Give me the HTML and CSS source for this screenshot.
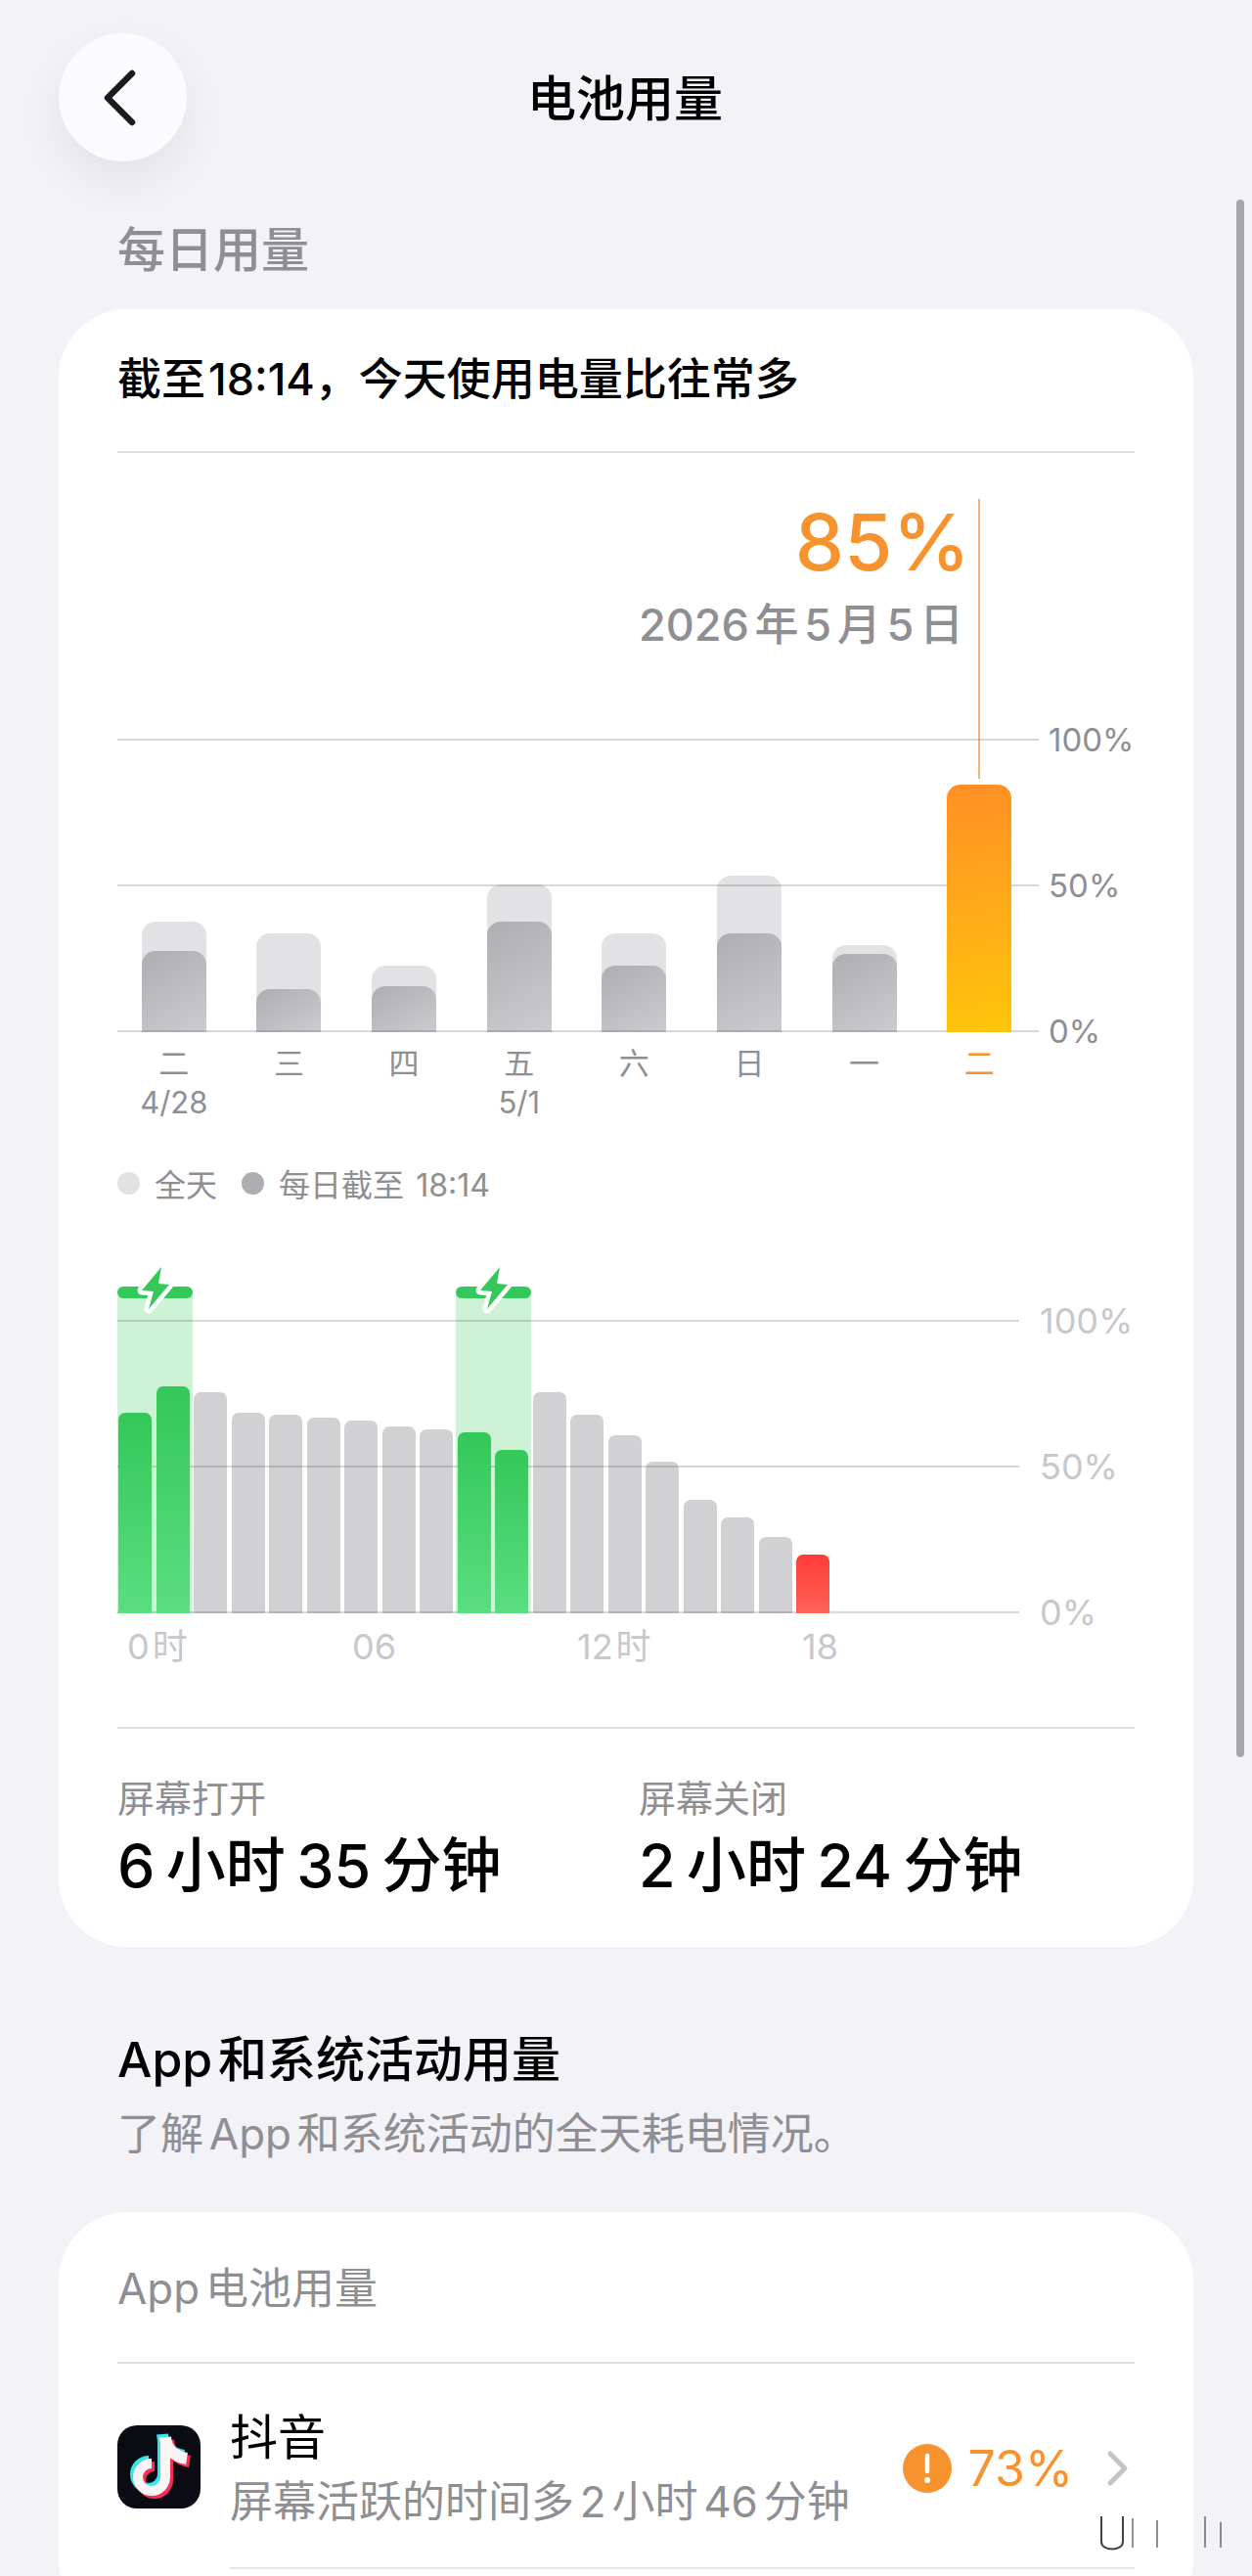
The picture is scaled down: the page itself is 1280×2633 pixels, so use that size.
FILE: index.html
```html
<!DOCTYPE html>
<html lang="zh">
<head>
    <meta charset="utf-8">
    <title>电池用量</title>
    <link rel="stylesheet" href="styles.css">
</head>
<body>
    <div class="page">
        <div class="top-bar">
            <div class="back-btn">
                <svg width="36" height="60" viewBox="0 0 36 60"><path d="M31 5 L6 30 L31 55" fill="none" stroke="#1c1c1e" stroke-width="6.5" stroke-linecap="round" stroke-linejoin="round"/></svg>
            </div>
            <h1 class="title">电池用量</h1>
        </div>

        <h2 class="section-label">每日用量</h2>

        <div class="card usage-card">
            <p class="card-heading">截至 18:14，今天使用电量比往常多</p>
            <div class="divider"></div>

            <div class="callout">
                <div class="callout-value">85%</div>
                <div class="callout-date">2026 年 5 月 5 日</div>
                <div class="callout-line"></div>
            </div>

            <div class="plot">
                <div class="days">
                    <div class="day"><div class="bar-all" style="height:113px"></div><div class="bar-now" style="height:83px"></div></div>
                    <div class="day"><div class="bar-all" style="height:101px"></div><div class="bar-now" style="height:44px"></div></div>
                    <div class="day"><div class="bar-all" style="height:68px"></div><div class="bar-now" style="height:47px"></div></div>
                    <div class="day"><div class="bar-all" style="height:151px"></div><div class="bar-now" style="height:113px"></div></div>
                    <div class="day"><div class="bar-all" style="height:101px"></div><div class="bar-now" style="height:68px"></div></div>
                    <div class="day"><div class="bar-all" style="height:160px"></div><div class="bar-now" style="height:101px"></div></div>
                    <div class="day"><div class="bar-all" style="height:89px"></div><div class="bar-now" style="height:80px"></div></div>
                    <div class="day"><div class="bar-today" style="height:253px"></div></div>
                </div>
                <div class="axis">
                    <div class="axis-row"><span class="axis-line"></span><span class="axis-label">100%</span></div>
                    <div class="axis-row"><span class="axis-line"></span><span class="axis-label">50%</span></div>
                    <div class="axis-row"><span class="axis-line"></span><span class="axis-label">0%</span></div>
                </div>
            </div>

            <div class="day-labels">
                <div class="day-label">二<br>4/28</div>
                <div class="day-label">三</div>
                <div class="day-label">四</div>
                <div class="day-label">五<br>5/1</div>
                <div class="day-label">六</div>
                <div class="day-label">日</div>
                <div class="day-label">一</div>
                <div class="day-label today">二</div>
            </div>

            <div class="legend">
                <span class="dot dot-all"></span><span class="legend-text">全天</span>
                <span class="dot dot-now"></span><span class="legend-text">每日截至 18:14</span>
            </div>

            <div class="plot hourly">
                <div class="charge charge-a">
                    <div class="charge-cap"></div>
                    <svg class="bolt" width="44" height="56" viewBox="0 0 44 56"><path d="M27 6 L7 30 L19 31 L14 49 L35 24 L24 23 Z" fill="#34c759" stroke="#fff" stroke-width="9" stroke-linejoin="round" paint-order="stroke"/></svg>
                </div>
                <div class="charge charge-b">
                    <div class="charge-cap"></div>
                    <svg class="bolt" width="44" height="56" viewBox="0 0 44 56"><path d="M27 6 L7 30 L19 31 L14 49 L35 24 L24 23 Z" fill="#34c759" stroke="#fff" stroke-width="9" stroke-linejoin="round" paint-order="stroke"/></svg>
                </div>
                <div class="hours">
                    <div class="hour green" style="height:205px"></div>
                    <div class="hour green" style="height:232px"></div>
                    <div class="hour" style="height:226px"></div>
                    <div class="hour" style="height:205px"></div>
                    <div class="hour" style="height:203px"></div>
                    <div class="hour" style="height:200px"></div>
                    <div class="hour" style="height:197px"></div>
                    <div class="hour" style="height:191px"></div>
                    <div class="hour" style="height:188px"></div>
                    <div class="hour green" style="height:185px"></div>
                    <div class="hour green" style="height:167px"></div>
                    <div class="hour" style="height:226px"></div>
                    <div class="hour" style="height:203px"></div>
                    <div class="hour" style="height:182px"></div>
                    <div class="hour" style="height:155px"></div>
                    <div class="hour" style="height:116px"></div>
                    <div class="hour" style="height:98px"></div>
                    <div class="hour" style="height:78px"></div>
                    <div class="hour red" style="height:60px"></div>
                </div>
                <div class="axis">
                    <div class="axis-row"><span class="axis-line"></span><span class="axis-label">100%</span></div>
                    <div class="axis-row"><span class="axis-line"></span><span class="axis-label">50%</span></div>
                    <div class="axis-row"><span class="axis-line"></span><span class="axis-label">0%</span></div>
                </div>
            </div>

            <div class="hour-labels">
                <span>0 时</span>
                <span>06</span>
                <span>12 时</span>
                <span>18</span>
            </div>

            <div class="divider stats-divider"></div>

            <div class="stats">
                <div class="stat">
                    <div class="stat-label">屏幕打开</div>
                    <div class="stat-value">6 小时 35 分钟</div>
                </div>
                <div class="stat">
                    <div class="stat-label">屏幕关闭</div>
                    <div class="stat-value">2 小时 24 分钟</div>
                </div>
            </div>
        </div>

        <h2 class="activity-title">App 和系统活动用量</h2>
        <p class="activity-desc">了解 App 和系统活动的全天耗电情况。</p>

        <div class="card apps-card">
            <p class="apps-label">App 电池用量</p>
            <div class="divider"></div>
            <div class="app-row">
                <svg class="app-icon" width="85" height="85" viewBox="0 0 85 85">
                    <rect width="85" height="85" rx="20" fill="#0b0b14"/>
                    <g transform="translate(-3 -3)" fill="none" stroke="#35e6e8" stroke-width="10">
                        <path d="M49 17 V53 A14 14 0 1 1 35 39"/>
                        <path d="M49 12 C50 24 58 32 71 34" stroke-width="12"/>
                    </g>
                    <g transform="translate(3 3)" fill="none" stroke="#f0305a" stroke-width="10">
                        <path d="M49 17 V53 A14 14 0 1 1 35 39"/>
                        <path d="M49 12 C50 24 58 32 71 34" stroke-width="12"/>
                    </g>
                    <g fill="none" stroke="#fbf4f5" stroke-width="10">
                        <path d="M49 17 V53 A14 14 0 1 1 35 39"/>
                        <path d="M49 12 C50 24 58 32 71 34" stroke-width="12"/>
                    </g>
                </svg>
                <div class="app-main">
                    <div class="app-text">
                        <div class="app-name">抖音</div>
                        <div class="app-note">屏幕活跃的时间多 2 小时 46 分钟</div>
                    </div>
                    <div class="app-side">
                        <svg width="50" height="50" viewBox="0 0 50 50"><circle cx="25" cy="25" r="25" fill="#f7932e"/><path d="M25 12 V28" stroke="#fff" stroke-width="4.5" stroke-linecap="round"/><circle cx="25" cy="37" r="3" fill="#fff"/></svg>
                        <span class="app-percent">73%</span>
                        <svg width="24" height="38" viewBox="0 0 24 38"><path d="M4 4 L19 19 L4 34" fill="none" stroke="#c4c4c7" stroke-width="5" stroke-linecap="round" stroke-linejoin="round"/></svg>
                    </div>
                </div>
            </div>
        </div>

        <div class="scrollbar"></div>

        <svg class="watermark" width="200" height="40" viewBox="0 0 200 40">
            <defs>
                <linearGradient id="wm-fade" x1="0" x2="1" y1="0" y2="0">
                    <stop offset="0" stop-color="#555" stop-opacity="0"/>
                    <stop offset="1" stop-color="#333" stop-opacity=".9"/>
                </linearGradient>
            </defs>
            <path d="M0 8 H200" stroke="url(#wm-fade)" stroke-width="2"/>
            <path d="M76 2 V28 C76 38 98 38 98 28 V2" fill="none" stroke="#222" stroke-width="2" opacity=".85"/>
            <path d="M108 4 V34 M133 6 V34 M182 2 V34 M198 8 V34" fill="none" stroke="#444" stroke-width="2" opacity=".6"/>
        </svg>
    </div>
</body>
</html>
```

FILE: styles.css
```css
* {
    box-sizing: border-box;
}

html, body {
    margin: 0;
    padding: 0;
}

body {
    background-color: #f2f2f7;
    color: #000;
    font-family: 'Inter', 'Noto Sans CJK SC', sans-serif;
}

h1, h2, p {
    margin: 0;
    font-weight: normal;
}

.page {
    position: relative;
    width: 1280px;
    height: 2633px;
    overflow: hidden;
    padding: 34px 60px 0;
}

/* top bar */
.top-bar {
    display: flex;
    align-items: center;
    height: 131px;
}

.back-btn {
    flex: none;
    width: 131px;
    height: 131px;
    border-radius: 50%;
    background-color: #fbfbfd;
    box-shadow: 0 20px 50px rgba(0, 0, 0, 0.07);
    display: flex;
    align-items: center;
    justify-content: center;
    padding-right: 8px;
}

.title {
    width: 896px;
    padding-top: 2px;
    text-align: center;
    font-size: 50px;
    font-weight: 500;
    line-height: 60px;
}

.section-label {
    margin: 61px 0 30px 60px;
    font-size: 49px;
    font-weight: 500;
    line-height: 60px;
    color: #8e8e93;
}

.card {
    background-color: #fff;
    border-radius: 70px;
    padding: 0 60px;
}

.divider {
    height: 2px;
    background-color: #dcdcde;
}

.usage-card {
    padding-top: 42px;
    padding-bottom: 48px;
}

.card-heading {
    font-size: 45px;
    font-weight: 500;
    line-height: 60px;
    margin-bottom: 43px;
    word-spacing: -0.2em;
}

/* daily chart */
.callout {
    position: relative;
    padding: 46px 175px 0 0;
    text-align: right;
    height: 292px;
}

.callout-value {
    margin-right: -7px;
    font-size: 80px;
    font-weight: 500;
    line-height: 90px;
    color: #f7932e;
}

.callout-date {
    margin-top: 10px;
    font-size: 45px;
    font-weight: 500;
    line-height: 60px;
    color: #8e8e93;
    word-spacing: -0.14em;
}

.callout-line {
    position: absolute;
    top: 47px;
    left: 880px;
    width: 2px;
    height: 286px;
    background-color: #f0b780;
}

.plot {
    position: relative;
    height: 300px;
    width: 1040px;
}

.days {
    display: flex;
    align-items: flex-end;
    height: 100%;
    width: 941px;
    margin-left: -1px;
}

.day {
    flex: 1;
    display: grid;
    justify-items: center;
    align-items: end;
    height: 100%;
}

.day > div {
    grid-area: 1 / 1;
    width: 66px;
    border-radius: 14px 14px 0 0;
}

.bar-all {
    background-color: #e2e2e4;
}

.bar-now {
    background: linear-gradient(150deg, #adadb2, #cbcbd0);
}

.bar-today {
    position: relative;
    z-index: 2;
    background: linear-gradient(170deg, #ff8f26, #ffc60a);
}

.axis {
    position: absolute;
    top: 0;
    bottom: 0;
    left: 0;
    right: 0;
    z-index: 1;
    display: flex;
    flex-direction: column;
    justify-content: space-between;
}

.axis-row {
    display: flex;
    align-items: center;
    height: 2px;
}

.axis-line {
    flex: 1;
    height: 2px;
    background-color: rgba(60, 60, 67, 0.2);
}

.axis-label {
    width: 88px;
    margin-left: 10px;
    font-size: 33px;
    line-height: 40px;
    color: #8e8e93;
}

.day-labels {
    display: flex;
    width: 941px;
    margin-left: -1px;
    padding-top: 12px;
}

.day-label {
    flex: 1;
    text-align: center;
    font-size: 31px;
    line-height: 40px;
    color: #8e8e93;
}

.day-label.today {
    color: #f7932e;
}

.legend {
    display: flex;
    align-items: center;
    height: 40px;
    margin-top: 42px;
    font-size: 32px;
    color: #8e8e93;
}

.dot {
    width: 23px;
    height: 23px;
    border-radius: 50%;
}

.dot-all {
    background-color: #e2e2e4;
}

.dot-now {
    background-color: #adadb2;
}

.legend-text {
    margin: 0 25px 0 15px;
    word-spacing: 0.1em;
}

/* hourly chart */
.hourly {
    margin-top: 120px;
}

.hourly .axis-label {
    width: 97px;
    margin-left: 21px;
    font-size: 36px;
    color: #c7c7cc;
}

.hours {
    display: flex;
    align-items: flex-end;
    gap: 4.5px;
    height: 100%;
    padding-left: 1px;
    position: relative;
}

.hour {
    width: 34px;
    border-radius: 7px 7px 0 0;
    background-color: #d1d1d3;
}

.hour.green {
    position: relative;
    z-index: 2;
    background: linear-gradient(180deg, #34c759, #5ade80);
}

.hour.red {
    position: relative;
    z-index: 2;
    background: linear-gradient(180deg, #ff3b3b, #ff6257);
}

.charge {
    position: absolute;
    top: -34px;
    bottom: 0;
    width: 77px;
    background-color: #cdf2d6;
    border-radius: 6px 6px 0 0;
    display: flex;
    justify-content: center;
}

.charge-a {
    left: 0;
}

.charge-b {
    left: 346px;
}

.charge-cap {
    position: absolute;
    top: 0;
    left: 0;
    right: 0;
    height: 12px;
    border-radius: 6px;
    background-color: #34c759;
}

.bolt {
    position: absolute;
    top: -26px;
    left: 18px;
}

.hour-labels {
    display: flex;
    padding-left: 10px;
    margin-top: 14px;
    font-size: 36px;
    line-height: 40px;
    color: #c7c7cc;
    word-spacing: -0.2em;
}

.hour-labels span {
    width: 230px;
}

.stats-divider {
    margin-top: 62px;
}

.stats {
    display: flex;
    padding-top: 46px;
}

.stat {
    flex: none;
    width: 533px;
}

.stat-label {
    font-size: 38px;
    line-height: 50px;
    color: #8e8e93;
}

.stat-value {
    margin-top: 9px;
    font-size: 61px;
    font-weight: 500;
    line-height: 70px;
    word-spacing: -0.08em;
}

/* activity section */
.activity-title {
    margin: 85px 0 0 60px;
    font-size: 50px;
    font-weight: 500;
    line-height: 60px;
    word-spacing: -0.15em;
}

.activity-desc {
    margin: 19px 0 53px 60px;
    font-size: 44px;
    line-height: 54px;
    color: #8e8e93;
    word-spacing: -0.15em;
}

.apps-card {
    padding-top: 51px;
    padding-bottom: 60px;
}

.apps-label {
    font-size: 44px;
    line-height: 54px;
    color: #8e8e93;
    margin-bottom: 48px;
    word-spacing: -0.15em;
}

.app-row {
    display: flex;
    align-items: center;
}

.app-icon {
    flex: none;
}

.app-main {
    flex: 1;
    margin-left: 30px;
    display: flex;
    align-items: center;
    justify-content: space-between;
    padding: 46px 5px 40px 0;
    border-bottom: 2px solid #e5e5e7;
}

.app-name {
    font-size: 49px;
    line-height: 60px;
}

.app-note {
    margin-top: 8px;
    font-size: 44px;
    line-height: 54px;
    color: #8e8e93;
    word-spacing: -0.15em;
}

.app-side {
    display: flex;
    align-items: center;
}

.app-percent {
    margin: 0 34px 0 17px;
    font-size: 50px;
    line-height: 60px;
    color: #f7932e;
}

.scrollbar {
    position: absolute;
    top: 204px;
    left: 1264px;
    width: 8px;
    height: 1592px;
    border-radius: 4px;
    background-color: #a5a5ab;
}

.watermark {
    position: absolute;
    top: 2570px;
    left: 1050px;
}
```
